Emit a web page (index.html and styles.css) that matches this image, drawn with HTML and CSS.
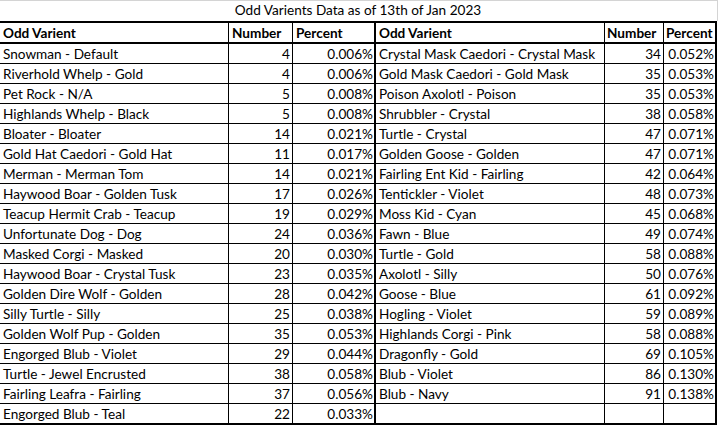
FILE: index.html
```html
<!DOCTYPE html>
<html>
<head>
<meta charset="utf-8">
<link rel="stylesheet" href="styles.css">
</head>
<body>
<div class="sheet">
  <div class="title">Odd Varients Data as of 13th of Jan 2023</div>
  <div class="row head">
    <div class="c c1">Odd Varient</div><div class="c c2">Number</div><div class="c c3">Percent</div>
    <div class="c c4">Odd Varient</div><div class="c c5">Number</div><div class="c c6">Percent</div>
  </div>
  <div class="row"><div class="c c1">Snowman - Default</div><div class="c c2 n">4</div><div class="c c3 n">0.006%</div><div class="c c4">Crystal Mask Caedori - Crystal Mask</div><div class="c c5 n">34</div><div class="c c6 n">0.052%</div></div>
  <div class="row"><div class="c c1">Riverhold Whelp - Gold</div><div class="c c2 n">4</div><div class="c c3 n">0.006%</div><div class="c c4">Gold Mask Caedori - Gold Mask</div><div class="c c5 n">35</div><div class="c c6 n">0.053%</div></div>
  <div class="row"><div class="c c1">Pet Rock - N/A</div><div class="c c2 n">5</div><div class="c c3 n">0.008%</div><div class="c c4">Poison Axolotl - Poison</div><div class="c c5 n">35</div><div class="c c6 n">0.053%</div></div>
  <div class="row"><div class="c c1">Highlands Whelp - Black</div><div class="c c2 n">5</div><div class="c c3 n">0.008%</div><div class="c c4">Shrubbler - Crystal</div><div class="c c5 n">38</div><div class="c c6 n">0.058%</div></div>
  <div class="row"><div class="c c1">Bloater - Bloater</div><div class="c c2 n">14</div><div class="c c3 n">0.021%</div><div class="c c4">Turtle - Crystal</div><div class="c c5 n">47</div><div class="c c6 n">0.071%</div></div>
  <div class="row"><div class="c c1">Gold Hat Caedori - Gold Hat</div><div class="c c2 n">11</div><div class="c c3 n">0.017%</div><div class="c c4">Golden Goose - Golden</div><div class="c c5 n">47</div><div class="c c6 n">0.071%</div></div>
  <div class="row"><div class="c c1">Merman - Merman Tom</div><div class="c c2 n">14</div><div class="c c3 n">0.021%</div><div class="c c4">Fairling Ent Kid - Fairling</div><div class="c c5 n">42</div><div class="c c6 n">0.064%</div></div>
  <div class="row"><div class="c c1">Haywood Boar - Golden Tusk</div><div class="c c2 n">17</div><div class="c c3 n">0.026%</div><div class="c c4">Tentickler - Violet</div><div class="c c5 n">48</div><div class="c c6 n">0.073%</div></div>
  <div class="row"><div class="c c1">Teacup Hermit Crab - Teacup</div><div class="c c2 n">19</div><div class="c c3 n">0.029%</div><div class="c c4">Moss Kid - Cyan</div><div class="c c5 n">45</div><div class="c c6 n">0.068%</div></div>
  <div class="row"><div class="c c1">Unfortunate Dog - Dog</div><div class="c c2 n">24</div><div class="c c3 n">0.036%</div><div class="c c4">Fawn - Blue</div><div class="c c5 n">49</div><div class="c c6 n">0.074%</div></div>
  <div class="row"><div class="c c1">Masked Corgi - Masked</div><div class="c c2 n">20</div><div class="c c3 n">0.030%</div><div class="c c4">Turtle - Gold</div><div class="c c5 n">58</div><div class="c c6 n">0.088%</div></div>
  <div class="row"><div class="c c1">Haywood Boar - Crystal Tusk</div><div class="c c2 n">23</div><div class="c c3 n">0.035%</div><div class="c c4">Axolotl - Silly</div><div class="c c5 n">50</div><div class="c c6 n">0.076%</div></div>
  <div class="row"><div class="c c1">Golden Dire Wolf - Golden</div><div class="c c2 n">28</div><div class="c c3 n">0.042%</div><div class="c c4">Goose - Blue</div><div class="c c5 n">61</div><div class="c c6 n">0.092%</div></div>
  <div class="row"><div class="c c1">Silly Turtle - Silly</div><div class="c c2 n">25</div><div class="c c3 n">0.038%</div><div class="c c4">Hogling - Violet</div><div class="c c5 n">59</div><div class="c c6 n">0.089%</div></div>
  <div class="row"><div class="c c1">Golden Wolf Pup - Golden</div><div class="c c2 n">35</div><div class="c c3 n">0.053%</div><div class="c c4">Highlands Corgi - Pink</div><div class="c c5 n">58</div><div class="c c6 n">0.088%</div></div>
  <div class="row"><div class="c c1">Engorged Blub - Violet</div><div class="c c2 n">29</div><div class="c c3 n">0.044%</div><div class="c c4">Dragonfly - Gold</div><div class="c c5 n">69</div><div class="c c6 n">0.105%</div></div>
  <div class="row"><div class="c c1">Turtle - Jewel Encrusted</div><div class="c c2 n">38</div><div class="c c3 n">0.058%</div><div class="c c4">Blub - Violet</div><div class="c c5 n">86</div><div class="c c6 n">0.130%</div></div>
  <div class="row"><div class="c c1">Fairling Leafra - Fairling</div><div class="c c2 n">37</div><div class="c c3 n">0.056%</div><div class="c c4">Blub - Navy</div><div class="c c5 n">91</div><div class="c c6 n">0.138%</div></div>
  <div class="row last"><div class="c c1">Engorged Blub - Teal</div><div class="c c2 n">22</div><div class="c c3 n">0.033%</div><div class="c c4"></div><div class="c c5 n"></div><div class="c c6 n"></div></div>
</div>
</body>
</html>
```
FILE: styles.css
```css
* { box-sizing: border-box; }
html, body { margin: 0; padding: 0; background: #fff; }
body {
  font-family: Lato, "Open Sans", sans-serif;
  font-size: 13.6px;
  color: #000;
}
.sheet {
  width: 718px;
}
.title {
  width: 718px;
  height: 21px;
  border-top: 1px solid #d4d4d4;
  border-right: 1px solid #d4d4d4;
  text-align: center;
  line-height: 19px;
  padding-right: 1px;
}
.row {
  display: flex;
  width: 717px;
  height: 20px;
  border-bottom: 1px solid #000;
}
.row.head {
  height: 23px;
  border-top: 2px solid #000;
  border-bottom: 2px solid #000;
  font-weight: bold;
}
.row.last {
  height: 21px;
  border-bottom: 2px solid #000;
}
.c {
  height: 19px;
  line-height: 20px;
  padding: 0 3px;
  white-space: nowrap;
  overflow: hidden;
  border-right: 1px solid #000;
  flex: none;
}
.c1 { width: 229px; }
.c2 { width: 64px; }
.c3 { width: 83px; border-right-width: 2px; }
.c4 { width: 229px; }
.c5 { width: 59px; }
.c6 { width: 53px; border-right-width: 2px; }
.n { text-align: right; padding: 0 2px 0 0; }
.c3.n, .c6.n { padding-right: 1px; }
.head .c { text-align: left; padding: 0 1px 0 3px; }
.head .c5, .head .c6 { padding-left: 2px; }
```
